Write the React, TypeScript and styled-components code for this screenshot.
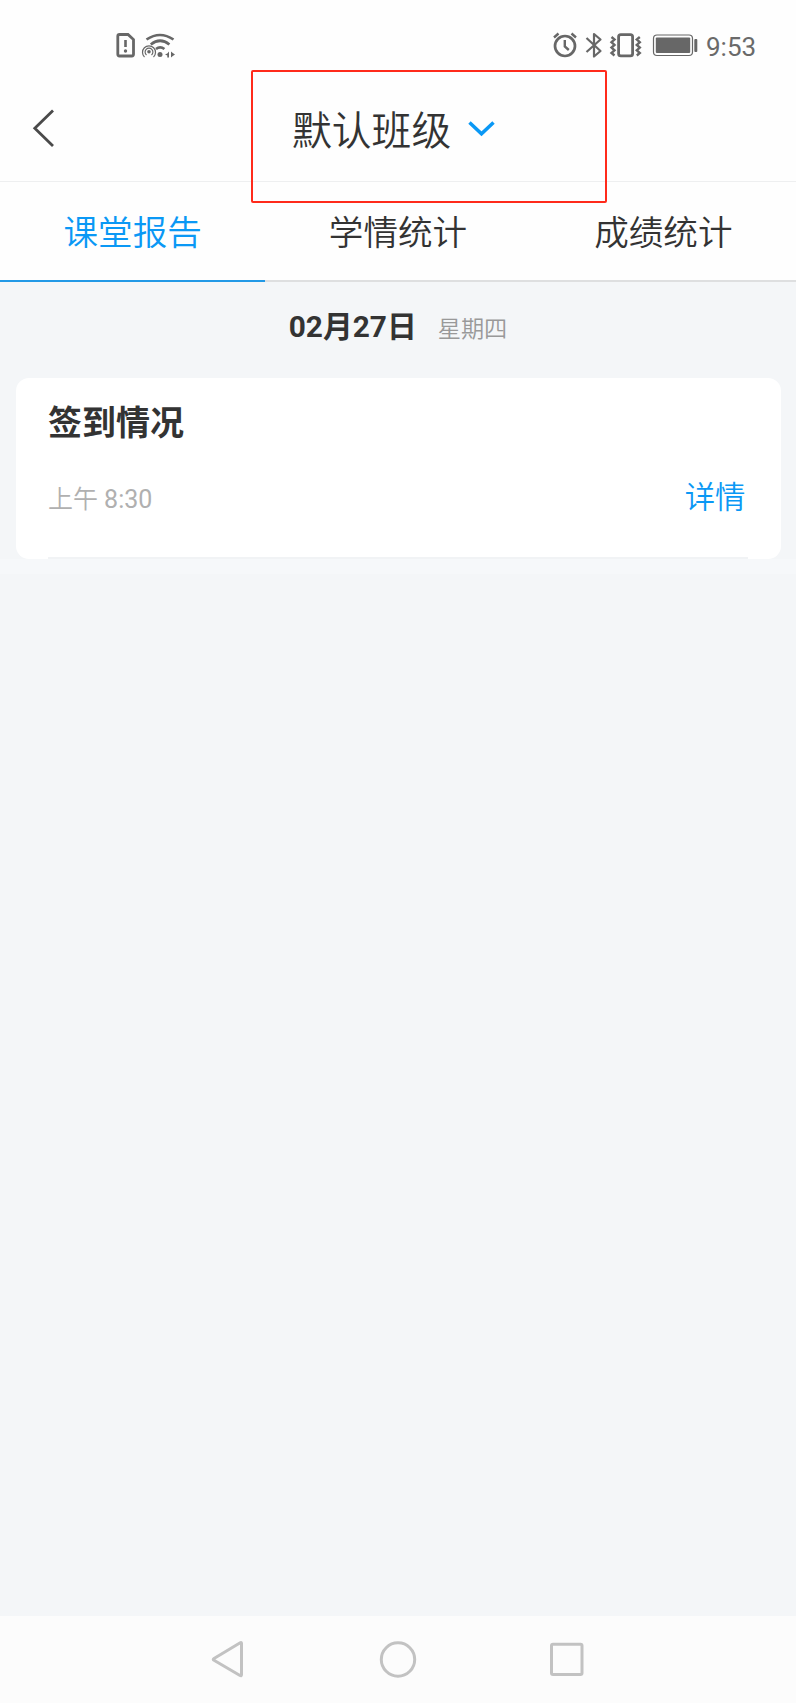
import React from 'react';
import styled, { createGlobalStyle } from 'styled-components';

const Global = createGlobalStyle`
  * { box-sizing: border-box; }
  body { margin: 0; background: #f4f6f8; font-family: Roboto, 'Noto Sans CJK SC', sans-serif; color: #333; }
`;

const Screen = styled.div`
  display: flex;
  flex-direction: column;
  width: 796px;
  height: 1703px;
  background: #f4f6f8;
`;

const StatusBar = styled.div`
  display: flex;
  justify-content: space-between;
  height: 72px;
  padding: 20px 40px 0 100px;
  background: #fefefe;
`;

const StatusGroup = styled.div`
  display: flex;
  height: 50px;
`;

const Clock = styled.span`
  width: 51px;
  padding-left: 1px;
  font-size: 26px;
  line-height: 54px;
  color: #6a6a6a;
  white-space: nowrap;
`;

const Header = styled.header`
  display: grid;
  grid-template-columns: 251px 356px 1fr;
  height: 110px;
  border-bottom: 1px solid #eeeff0;
  background: #fefefe;
`;

const BackButton = styled.button`
  display: flex;
  align-items: flex-start;
  padding: 36px 0 0 30px;
  border: 0;
  background: none;
`;

const ClassPicker = styled.div`
  z-index: 1;
  display: flex;
  align-items: flex-start;
  gap: 17px;
  width: 356px;
  height: 133px;
  margin-top: -2px;
  padding: 29px 0 0 39px;
  border: 2px solid #ff2a1b;
  border-radius: 2px;
`;

const ClassName = styled.h1`
  margin: 0;
  font-size: 39.8px;
  font-weight: 350;
  line-height: 62px;
  white-space: nowrap;
`;

const Tabs = styled.nav`
  display: grid;
  grid-template-columns: repeat(3, 1fr);
  height: 100px;
  background: #fefefe;
`;

const Tab = styled.button<{ $active?: boolean }>`
  padding: 5px 0 0;
  border: 0;
  border-bottom: 2px solid ${p => (p.$active ? '#2299e6' : '#dedfe0')};
  background: none;
  font: 350 34.6px/93px Roboto, 'Noto Sans CJK SC', sans-serif;
  color: ${p => (p.$active ? '#0a98f5' : '#333')};
`;

const DateRow = styled.div`
  display: flex;
  justify-content: center;
  align-items: baseline;
  gap: 21px;
  height: 96px;
  line-height: 90px;
`;

const DateText = styled.strong`
  font-size: 29.8px;
`;

const Weekday = styled.span`
  font-size: 23.2px;
  font-weight: 350;
  color: #999;
`;

const Card = styled.section`
  height: 181px;
  margin: 0 15.5px;
  padding: 0 33px 0 32.5px;
  border-radius: 13px;
  background: #fff;
`;

const CardBody = styled.div`
  display: flex;
  flex-direction: column;
  height: 181px;
  padding-top: 19px;
`;

const CardTitle = styled.h2`
  margin: 0;
  font-size: 34px;
  line-height: 52px;
`;

const CardRow = styled.div`
  display: flex;
  justify-content: space-between;
  height: 110px;
  padding-top: 24px;
  border-bottom: 2px solid #f1f3f5;
`;

const Time = styled.span`
  font-size: 25px;
  font-weight: 350;
  line-height: 54px;
  color: #b0b0b0;
`;

const Digits = styled.span`
  font-weight: 400;
`;

const Detail = styled.a`
  padding-right: 2px;
  font-size: 30.4px;
  font-weight: 350;
  line-height: 50px;
  color: #0a98f5;
`;

const CardGap = styled.div`
  height: 15px;
  background: #f6f8fa;
`;

const NavBar = styled.footer`
  display: flex;
  justify-content: center;
  height: 87px;
  margin-top: auto;
  padding-left: 4px;
  background: #fcfcfc;
`;

function NetworkIcons() {
  return (
    <svg width="100" height="50" viewBox="0 0 100 50" fill="none" stroke="#676767">
      <path d="M19.500 14.500h8.500l5.500 5v14.800q0 1.700-1.700 1.700H19.500q-1.700 0-1.700-1.700V16.200q0-1.700 1.700-1.700z" strokeWidth="2.800" />
      <path d="M25.500 20v7" strokeWidth="2.600" />
      <circle cx="25.500" cy="31" r="1.700" fill="#676767" stroke="none" />
      <path d="M46.500 19.500q13.500-9 27 0M50.800 24.500q9.300-7.500 18.600 0M56 29q4.200-3.200 8.400 0" strokeWidth="2.700" />
      <circle cx="49" cy="31.800" r="1.800" fill="#676767" stroke="none" />
      <path d="M46.500 35a3.900 3.900 0 1 1 5 0M44.500 37a6.500 6.500 0 1 1 9 0" strokeWidth="1.200" />
      <circle cx="60" cy="34.500" r="2.500" fill="#676767" stroke="none" />
      <path d="M69 31.500v6h-1.700v-2l-2.300-1 2.300-1 1.700-2zM71 31.500v6l1.800-1.500 2.200-1.500-2.200-1.500z" fill="#676767" stroke="none" />
    </svg>
  );
}

function DeviceIcons() {
  return (
    <svg width="165" height="50" viewBox="0 0 165 50" fill="none" stroke="#676767">
      <circle cx="25" cy="26" r="10" strokeWidth="2.700" />
      <path d="M24.800 20v6.500l4 3.500M14 17.500l4.500-4M36 17.500l-4.500-4" strokeWidth="2.400" />
      <path d="M46.500 18l14 13-6.500 5.500V14l6.500 5.500-14 12.500" strokeWidth="2.200" strokeLinejoin="round" />
      <rect x="78.600" y="14.600" width="14" height="21.300" rx="2.200" strokeWidth="2.800" />
      <path d="M71.500 17l3 2.500-3 2.700 3 2.700-3 2.700 3 2.700-3 2.700 3 2.500M99.800 17l-3 2.500 3 2.700-3 2.700 3 2.700-3 2.700 3 2.700-3 2.500" strokeWidth="2.400" />
      <rect x="113.500" y="15" width="39" height="20.500" rx="3.500" strokeWidth="1.200" />
      <rect x="115.800" y="17.400" width="34.400" height="15.700" rx="1" fill="#676767" stroke="none" />
      <rect x="154.300" y="19" width="3" height="13" rx="1" fill="#676767" stroke="none" />
    </svg>
  );
}

export default function App() {
  return (
    <>
      <Global />
      <Screen>
        <StatusBar>
          <StatusGroup><NetworkIcons /></StatusGroup>
          <StatusGroup><DeviceIcons /><Clock>9:53</Clock></StatusGroup>
        </StatusBar>
        <Header>
          <BackButton aria-label="返回">
            <svg width="30" height="42" viewBox="0 0 30 42" fill="none" stroke="#4a4a4a" strokeWidth="2.800">
              <path d="M23 2.500L4.800 20.300L23 38" />
            </svg>
          </BackButton>
          <ClassPicker>
            <ClassName>默认班级</ClassName>
            <svg width="28" height="54" viewBox="0 0 28 54" fill="none" stroke="#0a98f5" strokeWidth="3.500">
              <path d="M1.500 21.500l12 11.300L25.500 21.500" />
            </svg>
          </ClassPicker>
        </Header>
        <Tabs>
          <Tab $active>课堂报告</Tab>
          <Tab>学情统计</Tab>
          <Tab>成绩统计</Tab>
        </Tabs>
        <DateRow>
          <DateText>02月27日</DateText>
          <Weekday>星期四</Weekday>
        </DateRow>
        <Card>
          <CardBody>
            <CardTitle>签到情况</CardTitle>
            <CardRow>
              <Time>上午 <Digits>8:30</Digits></Time>
              <Detail>详情</Detail>
            </CardRow>
          </CardBody>
        </Card>
        <CardGap />
        <NavBar>
          <svg width="420" height="87" viewBox="0 0 420 87" fill="none" stroke="#c2c2c2" strokeWidth="3" strokeLinejoin="round">
            <path d="M50.200 26.800Q51.500 26.200 51.500 27.500V58.500Q51.500 60.300 50 59.500L24 44.300Q22.500 43.400 24 42.500Z" />
            <circle cx="208" cy="43.500" r="16.700" />
            <rect x="361.500" y="28.300" width="30.500" height="30.200" rx="1.500" />
          </svg>
        </NavBar>
      </Screen>
    </>
  );
}
